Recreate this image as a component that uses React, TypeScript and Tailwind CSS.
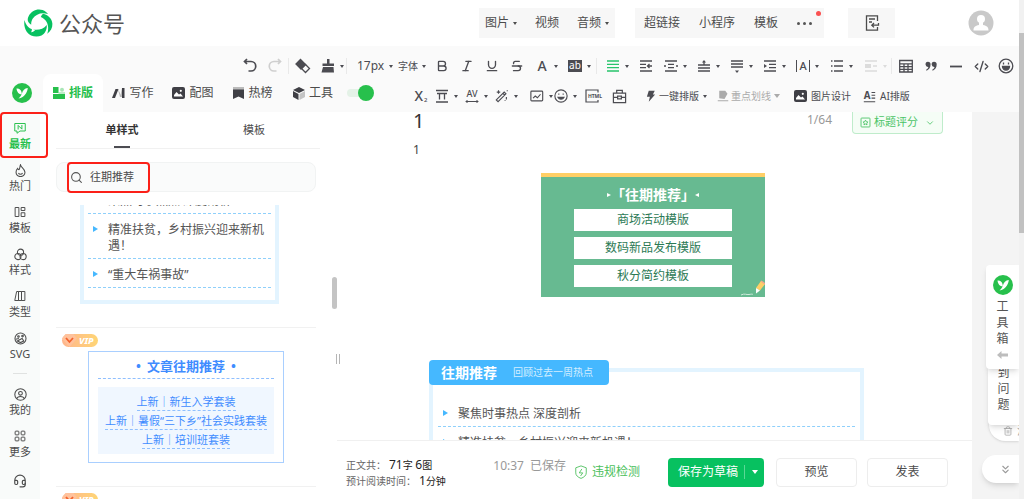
import type { ReactNode } from "react";
import {
	Bold,
	ChevronDown,
	ChevronsDown,
	CodeXml,
	Headset,
	Italic,
	Search,
	Strikethrough,
	Trash2,
	Underline,
} from "lucide-react";

interface ChildrenProps {
	children: ReactNode;
}

/** 16x16 outline icon, drawn with the current text color */
function Glyph({ children, size = 16 }: { children: ReactNode; size?: number }) {
	return (
		<svg
			width={size}
			height={size}
			viewBox="0 0 16 16"
			fill="none"
			stroke="currentColor"
			strokeWidth={1.3}
			className="shrink-0"
			aria-hidden="true"
		>
			{children}
		</svg>
	);
}

function Caret() {
	return (
		<svg width="4" height="3" viewBox="0 0 4 3" fill="currentColor" className="shrink-0" aria-hidden="true">
			<path d="M0 0h4L2 3z" />
		</svg>
	);
}

function Divider() {
	return <div className="h-4 w-px shrink-0 bg-[#e9e9e9]" />;
}

interface ToolProps {
	label: string;
	children: ReactNode;
	caret?: boolean;
	className?: string;
}

function Tool({ label, children, caret = false, className = "" }: ToolProps) {
	return (
		<button
			type="button"
			aria-label={label}
			className={`flex h-4 shrink-0 items-center ${className || (caret ? "w-[33px]" : "w-[25px]")}`}
		>
			<span className="flex w-6 shrink-0 items-center justify-center">{children}</span>
			{caret && <Caret />}
		</button>
	);
}

function BrandMark({ size }: { size: number }) {
	return (
		<svg width={size} height={size} viewBox="0 0 20 20" className="shrink-0" aria-hidden="true">
			<circle cx="10" cy="10" r="10" fill="#27c04c" />
			<path d="M4.500 5.500c2.800-.2 4.300.9 5 3.600l.4 2.400c-3-.2-4.900-2-5.400-6z" fill="#fff" />
			<path d="M15.800 5c-.3 2.800-1.300 5-3 6.900-1.600 1.800-3.300 2.900-6.300 3.600 1.900-1.700 2.900-3.200 3.500-5.200.8-3 2.500-5 5.800-5.300z" fill="#fff" />
		</svg>
	);
}

/* ---------- header ---------- */

function HeaderLink({ children, caret = false }: { children: ReactNode; caret?: boolean }) {
	return (
		<button type="button" className="flex items-center gap-1">
			{children}
			{caret && <Caret />}
		</button>
	);
}

function Header() {
	return (
		<header className="flex h-[46px] shrink-0 items-center bg-white text-xs text-[#4c4c4c]">
			<a href="#" className="flex items-center gap-1.5 pl-6 text-[22px] leading-7 text-[#555]">
				<svg width="29" height="28" viewBox="0 0 29 28" aria-hidden="true">
					<path d="M4.500 7.500C8 .5 16-1.500 22 3c.8.7 1.500 1.400 2 2.100-6-2.300-11.800-.3-15.200 4.300-1.200 1.800-1.700 3.800-1.600 6.300C3.500 13.500 3 10.500 4.500 7.500z" fill="#07c160" />
					<path d="M19 4.800c5 1.200 9 4.800 9.400 9.900.2 4-1.800 7.700-5.200 10 .4-.7 1.300-4 .8-7.500-.6-4.300-2.700-7-7.200-9.200.4-1.200 1.200-2.300 2.200-3.200z" fill="#07c160" />
					<path d="M.6 11c.9 5.500 5.300 9.800 10.900 9.800 4.800.1 8.500-1.300 11.200-4.800.6 4-1.800 9-5.200 10.500-5 2.200-11.400.9-14.600-3.600-2.400-3.400-3.200-8.200-2.300-11.900z" fill="#07c160" />
					<path d="M7.800 19.500c.2 1.400 0 2.700-.8 3.800 2-.3 3.300-1 4.200-2.200z" fill="#fff" />
				</svg>
				公众号
			</a>
			<div className="ml-auto flex items-center pr-[25px]">
				<nav className="flex h-[30px] items-center gap-[18px] bg-[#f7f7f7] px-1.5">
					<HeaderLink caret>图片</HeaderLink>
					<HeaderLink>视频</HeaderLink>
					<HeaderLink caret>音频</HeaderLink>
				</nav>
				<nav className="relative ml-5 flex h-[30px] items-center gap-[19px] bg-[#f7f7f7] pl-[9px] pr-3">
					<HeaderLink>超链接</HeaderLink>
					<HeaderLink>小程序</HeaderLink>
					<HeaderLink>模板</HeaderLink>
					<button type="button" aria-label="更多" className="flex gap-[3px]">
						<i className="size-[3px] rounded-full bg-[#555]" />
						<i className="size-[3px] rounded-full bg-[#555]" />
						<i className="size-[3px] rounded-full bg-[#555]" />
					</button>
					<i className="absolute right-[3px] top-[3px] size-[5px] rounded-full bg-[#fa5151]" />
				</nav>
				<button type="button" aria-label="导入" className="ml-6 flex h-[30px] w-[47px] items-center justify-center bg-[#f7f7f7]">
					<Glyph>
						<path d="M13.500 6V.8h-11v14.400h11V12M5 4h6M5 7h3M14.500 8v2.200H8M10 8l-2.200 2.200L10 12.400" />
					</Glyph>
				</button>
				<svg width="26" height="26" viewBox="0 0 26 26" className="ml-[73px]" aria-label="头像">
					<circle cx="13" cy="13" r="12.500" fill="#c9c9c9" />
					<circle cx="13" cy="9" r="4" fill="#fff" />
					<path d="M11 11h4v4c4 .8 5.500 2 5.500 5.500h-15C5.500 17 7 15.800 11 15z" fill="#fff" />
				</svg>
			</div>
		</header>
	);
}

/* ---------- toolbar ---------- */

function TopTab({ icon, children }: { icon: ReactNode; children: ReactNode }) {
	return (
		<button type="button" className="flex w-[60px] shrink-0 items-center justify-center gap-1 text-xs text-[#4c4c4c]">
			{icon}
			{children}
		</button>
	);
}

function FormatRow() {
	return (
		<div className="flex h-7 items-end pl-[238px]">
			<Tool label="撤销">
				<Glyph><path d="M2.500 3.500H9a4.500 4.500 0 0 1 0 9.500H6.500M5 1L2.500 3.500 5 6" strokeWidth={1.700} /></Glyph>
			</Tool>
			<Tool label="重做" className="w-[25px] text-[#cfcfcf]">
				<Glyph><path d="M13.500 3.500H7A4.500 4.500 0 0 0 7 13h2.500M11 1l2.500 2.500L11 6" strokeWidth={1.700} /></Glyph>
			</Tool>
			<Divider />
			<Tool label="清除格式" className="ml-0.5 w-[25px]">
				<Glyph>
					<path d="M5.500 1.500l5 5-4.500 4.500-5-5z" fill="currentColor" />
					<path d="M10.500 6.500l4 4-4 4-4-4z" />
				</Glyph>
			</Tool>
			<Tool label="格式刷" caret className="w-[30px]">
				<Glyph>
					<path d="M7 1h2.500v4.500H14V8H2.500V5.500H7zM3 9h10.500l.5 5.500H1.500z" fill="currentColor" stroke="none" />
				</Glyph>
			</Tool>
			<Divider />
			<label className="ml-2.5 flex h-4 shrink-0 items-center gap-1 text-xs">
				<select aria-label="字号" className="h-4 w-7 appearance-none text-xs leading-4"><option>17px</option></select>
				<Caret />
			</label>
			<label className="ml-[5px] flex h-4 w-8 shrink-0 items-center gap-1">
				<select aria-label="字体" className="h-4 appearance-none text-[10px] leading-4"><option>字体</option></select>
				<Caret />
			</label>
			<Tool label="加粗"><Bold size={14} strokeWidth={2.3} /></Tool>
			<Tool label="斜体"><Italic size={14} strokeWidth={2.3} /></Tool>
			<Tool label="下划线"><Underline size={14} strokeWidth={2.3} /></Tool>
			<Tool label="删除线"><Strikethrough size={14} strokeWidth={2.3} /></Tool>
			<Tool label="文字颜色" caret><span className="text-sm font-medium leading-4">A</span></Tool>
			<Tool label="背景色" caret>
				<span className="h-3 w-[14px] bg-[#4c4c52] text-[10px] leading-[11px] text-white">ab</span>
			</Tool>
			<Divider />
			<Tool label="两端对齐" caret className="ml-1 w-[33px]">
				<span className="text-[#27c46b]"><Glyph><path d="M2 3h12M2 6.300h12M2 9.700h12M2 13h12" /></Glyph></span>
			</Tool>
			<Tool label="缩进">
				<Glyph><path d="M2 3h12M2 6.300h6M2 9.700h6M2 13h12M9.500 8H14M11.500 6l-2 2 2 2" /></Glyph>
			</Tool>
			<Tool label="两侧缩进" caret>
				<Glyph><path d="M2 3h12M5 6.300h6M5 9.700h6M2 13h12M1 8h2M13 8h2" /></Glyph>
			</Tool>
			<Tool label="段前距" caret>
				<Glyph><path d="M2 7h12M2 10h12M2 13h12M8 4v3" /><path d="M8 2l2 2.500H6z" fill="currentColor" stroke="none" /></Glyph>
			</Tool>
			<Tool label="段后距" caret>
				<Glyph><path d="M2 3h12M2 6h12M2 9h12" /><path d="M8 15l2-2.500H6z" fill="currentColor" stroke="none" /></Glyph>
			</Tool>
			<Tool label="行间距" caret>
				<Glyph><path d="M2 3h12M7 6.300h7M7 9.700h7M2 13h12" /><path d="M2 6l3 2-3 2z" fill="currentColor" stroke="none" /></Glyph>
			</Tool>
			<Tool label="字间距" caret className="w-[34px]">
				<span className="flex h-3 w-[14px] items-center justify-center border-x border-current text-[11px] font-medium leading-3">A</span>
			</Tool>
			<Tool label="列表" caret className="w-[34px]">
				<Glyph><path d="M5 3h9M5 8h9M5 13h9M2 3h1.500M2 8h1.500M2 13h1.500" /></Glyph>
			</Tool>
			<Tool label="浮动" caret className="w-8 text-[#dcdcdc]">
				<Glyph><path d="M2 3h12M10 8h4M2 13h12" /><path d="M2 6h6v4H2z" fill="currentColor" stroke="none" /></Glyph>
			</Tool>
			<Divider />
			<Tool label="表格" className="ml-0.5 w-[25px]">
				<Glyph><path d="M1.700 2.500h12.600v11.500H1.700zM1.700 5.800h12.600M1.700 8.600h12.600M1.700 11.300h12.600M6 5.800V14M10 5.800V14" /></Glyph>
			</Tool>
			<Tool label="引用">
				<Glyph size={14}>
					<path d="M4.500 3a3 3 0 0 1 3 3c0 3.500-1.500 6-4.500 7.300l-.7-1C4 11.300 4.800 10.300 5 9a3 3 0 1 1-.5-6zM11.500 3a3 3 0 0 1 3 3c0 3.500-1.500 6-4.500 7.300l-.7-1c1.700-1 2.500-2 2.700-3.300a3 3 0 1 1-.5-6z" fill="currentColor" stroke="none" />
				</Glyph>
			</Tool>
			<Tool label="分割线"><Glyph><path d="M2 8.500h12" strokeWidth={1.800} /></Glyph></Tool>
			<Tool label="代码"><CodeXml size={15} strokeWidth={2.200} /></Tool>
			<Tool label="表情">
				<Glyph>
					<circle cx="8" cy="8" r="6.800" />
					<path d="M4.500 8.500h7a3.500 3.500 0 0 1-7 0z" fill="currentColor" />
					<path d="M5.500 4.500v2M10.500 4.500v2" />
				</Glyph>
			</Tool>
		</div>
	);
}

function InsertTools() {
	return (
		<div className="ml-[35px] flex items-center pt-1.5 text-[10px]">
			<Tool label="下标" className="w-[21px]">
				<span className="flex items-end gap-px text-sm font-medium leading-4">X<sub className="bottom-0 text-[6px] leading-[8px]">2</sub></span>
			</Tool>
			<Tool label="标题样式" caret className="w-[30px]">
				<Glyph><path d="M2 2.500h12M2 14h12M3 5.500h10M5.500 5.500v6M10.500 5.500v6" /></Glyph>
			</Tool>
			<Tool label="字距" caret className="w-[30px]">
				<Glyph>
					<path d="M2 13.500h12M3.500 12L2 13.500 3.500 15M12.500 12l1.500 1.500-1.500 1.500" strokeWidth={1} />
					<text x="8" y="9" fontSize="9" fontWeight="500" textAnchor="middle" fill="currentColor" stroke="none">AV</text>
				</Glyph>
			</Tool>
			<Tool label="魔法棒" caret className="w-[35px]">
				<Glyph size={14}><path d="M1.500 12.500l9-9 2 2-9 9zM9 5l2 2M4 1.500v4M2 3.500h4M13 9v3M11.500 12.500v1M14 1.500v1" /></Glyph>
			</Tool>
			<Tool label="图片" caret className="w-6">
				<Glyph size={14}><rect x="1" y="2.500" width="13.500" height="11" rx="1" /><path d="M3.500 10.500L6 8l2.500 2L12 6" /></Glyph>
			</Tool>
			<Tool label="表情" caret className="w-[33px]">
				<Glyph size={14}>
					<circle cx="8" cy="8" r="7" />
					<path d="M4.500 9.500c1.500 3 5.500 3 7 0z" fill="currentColor" />
					<path d="M5.500 5v1.500M10.500 5v1.500" />
				</Glyph>
			</Tool>
			<Tool label="HTML">
				<svg width="20" height="14" viewBox="0 0 20 14" fill="none" stroke="currentColor" strokeWidth={1.2} className="shrink-0" aria-hidden="true">
					<path d="M14 3.500V1H2v12h12v-2" />
					<text x="11" y="9" fontSize="5" fontWeight="700" textAnchor="middle" fill="currentColor" stroke="none">HTML</text>
				</svg>
			</Tool>
			<Tool label="素材箱" className="w-6">
				<Glyph size={15}><path d="M1.500 4.500h13v10h-13zM5 4.500v-3h6v3M1.500 9h4M10.500 9h4M6 7.500h4v3H6z" /></Glyph>
			</Tool>
			<button type="button" className="ml-3.5 flex items-center gap-0.5">
				<Glyph size={12}><path d="M5 1h8l-2.500 5h3L5 15.500l1.500-6.500H2.500z" fill="currentColor" stroke="none" /></Glyph>
				一键排版
				<span className="pl-0.5"><Caret /></span>
			</button>
			<button type="button" className="ml-2.5 flex items-center gap-0.5 text-[#aaa]">
				<Glyph size={12}><path d="M3 1h8l3 4-4 7-7-1zM1 13.500h14V15H1z" fill="currentColor" stroke="none" /></Glyph>
				重点划线
				<svg width="6" height="4" viewBox="0 0 6 4" fill="currentColor" className="ml-px"><path d="M0 0h6L3 4z" /></svg>
			</button>
			<button type="button" className="ml-3.5 flex items-center gap-1">
				<PictureIcon />
				图片设计
			</button>
			<button type="button" className="ml-3 flex items-center gap-1">
				<Glyph size={13}>
					<path d="M10.500 3H15M10.500 6.500H15M10.500 10H15M1 14.500h14" />
					<text x="5" y="11" fontSize="12" fontWeight="700" textAnchor="middle" fill="currentColor" stroke="none">A</text>
				</Glyph>
				AI排版
			</button>
		</div>
	);
}

function PictureIcon() {
	return (
		<svg width="13" height="12" viewBox="0 0 13 12" className="shrink-0" aria-hidden="true">
			<rect width="13" height="12" rx="2" fill="#3f3f45" />
			<path d="M2 9.500V8l2.500-3L7 7.500 8.500 6.500 11 9.500z" fill="#fff" />
			<circle cx="8.800" cy="3.800" r="1.100" fill="#fff" />
		</svg>
	);
}

function Toolbar() {
	return (
		<div className="shrink-0 bg-[#fafafa] text-[#4c4c52]">
			<FormatRow />
			<div className="flex h-[38px] items-center">
				<div className="flex w-[43px] shrink-0 items-center pl-3"><BrandMark size={20} /></div>
				<button
					type="button"
					className="flex h-full w-[60px] shrink-0 items-center justify-center gap-1 rounded-t-lg bg-white text-xs font-bold text-[#27c04c]"
				>
					<svg width="12" height="12" viewBox="0 0 12 12" fill="currentColor" aria-hidden="true">
						<path d="M0 0h5.500v6H0zM0 7h12v5H0z" />
						<circle cx="9" cy="2.800" r="2" opacity=".4" />
						<path d="M5.500 5H12v3H5.500z" opacity=".3" />
					</svg>
					排版
				</button>
				<TopTab
					icon={
						<svg width="13" height="12" viewBox="0 0 13 12" aria-hidden="true">
							<path d="M0 11l3.500-9h3L3 11z" fill="#3f3f45" />
							<path d="M5.500 1l3.500 7V1l2 9H8z" fill="#bbb" />
							<path d="M10 1h2.500v10H10z" fill="#3f3f45" />
						</svg>
					}
				>
					写作
				</TopTab>
				<TopTab icon={<PictureIcon />}>配图</TopTab>
				<TopTab
					icon={
						<svg width="11" height="12" viewBox="0 0 11 12" aria-hidden="true">
							<path d="M0 0h11v3H0z" fill="#bbb" />
							<path d="M0 2.500h11V12L5.500 9.500 0 12z" fill="#3f3f45" />
						</svg>
					}
				>
					热榜
				</TopTab>
				<TopTab
					icon={
						<svg width="12" height="13" viewBox="0 0 12 13" aria-hidden="true">
							<path d="M6 0l6 3-6 3-6-3z" fill="#3f3f45" />
							<path d="M0 4l5.500 3v6L0 10z" fill="#3f3f45" />
							<path d="M12 4L6.500 7v6l5.500-3z" fill="#c4c4c4" />
						</svg>
					}
				>
					工具
				</TopTab>
				<input
					type="checkbox"
					aria-label="启用插件"
					defaultChecked
					className="relative ml-1 h-4 w-[27px] shrink-0 appearance-none before:absolute before:left-0 before:top-1 before:h-2 before:w-5 before:rounded-full before:bg-[#e4f2e7] after:absolute after:right-0 after:top-0 after:size-4 after:rounded-full after:bg-[#27c04c]"
				/>
				<InsertTools />
			</div>
		</div>
	);
}

/* ---------- left side ---------- */

function SideItem({ icon, children, active = false }: { icon: ReactNode; children?: ReactNode; active?: boolean }) {
	return (
		<a
			href="#"
			className={`flex h-[42px] shrink-0 flex-col items-center gap-px text-[11px] leading-4 ${
				active ? "font-bold text-[#27c04c]" : "text-[#4c4c4c]"
			}`}
		>
			<span className="flex h-3.5 items-center">{icon}</span>
			{children}
		</a>
	);
}

function Sidebar() {
	return (
		<aside className="relative flex w-10 shrink-0 flex-col bg-[#f9fbfa] pt-[9px]">
			<SideItem active icon={<Glyph size={12}><path d="M1 2h14v10H8l-4 3v-3H1z" /><path d="M5.500 10V4.500l5 5V4" /></Glyph>}>最新</SideItem>
			<SideItem icon={<Glyph size={13}><path d="M8 1c.5 3 5.500 5 5.500 9a5.500 5.500 0 0 1-11 0c0-2 1-3.500 2-4.500.3 1 .8 1.500 1.500 1.500C7.500 6 7 3 8 1zM5.500 11c1 2 4 2 5 0" /></Glyph>}>热门</SideItem>
			<SideItem icon={<Glyph size={12}><path d="M1.500 2h5v12h-5zM9.500 2h5v4h-5zM9.500 9h5v5h-5z" /></Glyph>}>模板</SideItem>
			<SideItem icon={<Glyph size={13}><circle cx="8" cy="5.200" r="3.800" /><circle cx="4.800" cy="10.500" r="3.800" /><circle cx="11.200" cy="10.500" r="3.800" /></Glyph>}>样式</SideItem>
			<SideItem icon={<Glyph size={12}><path d="M1 14L3.500 2H6v12zM6 2h4v12H6zM10 2h4.500v12H10z" /></Glyph>}>类型</SideItem>
			<SideItem icon={<Glyph size={13}><circle cx="8" cy="8" r="6.800" /><circle cx="5.500" cy="5.500" r="1" /><circle cx="10.500" cy="5" r="1" /><path d="M4 11l6-3 2 3-4 2zM2 9l4-1" /></Glyph>}>SVG</SideItem>
			<div className="mx-auto h-3.5 w-[14px] shrink-0 border-t border-[#e0e2e1]" />
			<SideItem icon={<Glyph size={13}><circle cx="8" cy="8" r="7" /><circle cx="8" cy="6.500" r="2.300" /><path d="M3.500 13c.8-3.500 8.200-3.500 9 0" /></Glyph>}>我的</SideItem>
			<SideItem icon={<Glyph size={12}><rect x="1.500" y="1.500" width="5" height="5" rx="1" /><rect x="9.500" y="1.500" width="5" height="5" rx="1" /><rect x="1.500" y="9.500" width="5" height="5" rx="1" /><rect x="9.500" y="9.500" width="5" height="5" rx="1" /></Glyph>}>更多</SideItem>
			<SideItem icon={<Headset size={14} strokeWidth={2} className="mt-1.5" />} />
			<div className="absolute left-0 top-0 z-20 h-[46px] w-12 rounded-sm border-2 border-[#fb2018]" />
		</aside>
	);
}

function HotItem({ children }: ChildrenProps) {
	return (
		<li className="flex border-b border-dashed border-[#8fd0fb] pb-1 pl-[5px] pt-2 text-xs leading-4 text-[#555]">
			<svg width="5" height="6" viewBox="0 0 5 6" className="mr-[10px] mt-1 shrink-0" aria-hidden="true">
				<path d="M0 0l5 3-5 3z" fill="#45b8ff" />
			</svg>
			<span>{children}</span>
		</li>
	);
}

function VipBadge() {
	return (
		<div className="flex h-[13px] w-9 items-center rounded-full bg-linear-to-r from-[#ffb58c] to-[#ffd575] text-[9px] font-extrabold italic leading-[13px] text-white">
			<svg width="15" height="13" viewBox="0 0 15 13" className="mr-0.5 shrink-0" aria-hidden="true">
				<path d="M3.500 0h8L15 4.500 7.500 13 0 4.500z" fill="#ffc29c" />
				<path d="M4 4l3.500 4L11 4" fill="none" stroke="#f4622c" strokeWidth="1.800" />
			</svg>
			VIP
		</div>
	);
}

function NewLink({ children }: ChildrenProps) {
	return (
		<li className="h-[19px]">
			<a href="#" className="inline-block border-b border-dashed border-[#8fbfff] leading-4">{children}</a>
		</li>
	);
}

function StylePanel() {
	return (
		<section className="flex w-[292px] shrink-0 flex-col pl-4 pr-3">
			<div className="flex h-[37px] shrink-0 border-b border-[#f1f1f1] text-[11px] text-[#4c4c4c]">
				<button type="button" className="relative flex-1 font-bold text-[#333]">
					单样式
					<i className="absolute bottom-0 left-1/2 h-0.5 w-4 -translate-x-1/2 bg-[#4c4c52]" />
				</button>
				<button type="button" className="flex-1">模板</button>
			</div>
			<div className="relative mr-1 mt-[13px] flex h-[30px] shrink-0 items-center gap-[7px] rounded-lg border border-[#f1f3f3] bg-[#fafbfb] pl-[13px]">
				<Search size={13} strokeWidth={2} className="shrink-0 text-[#555]" />
				<input aria-label="搜索" defaultValue="往期推荐" className="w-full min-w-0 bg-transparent text-[11px] leading-4 text-[#4c4c4c] outline-none" />
				<div className="pointer-events-none absolute -top-px left-2.5 h-[31px] w-[83px] rounded-sm border-2 border-[#fb2018]" />
			</div>
			<div className="mr-1 mt-[13px] min-h-0 flex-1 overflow-hidden">
				<div className="-mt-5 border-b border-[#f1f1f1] pb-[23px] pl-6 pr-[37px]">
					<ul className="border-4 border-t-0 border-[#e3f4ff] px-1 pb-3">
						<HotItem>聚焦时事热点 深度剖析</HotItem>
						<HotItem>精准扶贫，乡村振兴迎来新机遇！</HotItem>
						<HotItem>“重大车祸事故”</HotItem>
					</ul>
				</div>
				<div className="border-b border-[#f1f1f1] pb-[23px] pl-1.5 pr-8 pt-1.5">
					<VipBadge />
					<div className="ml-[26px] mt-1 border border-[#a9cfff] px-[9px] pb-2 text-center text-[#3f8cff]">
						<h3 className="flex justify-center gap-1.5 border-b border-dashed border-[#8fbfff] pb-0.5 pt-1 text-[13px] font-bold leading-5">
							<span>•</span>
							文章往期推荐
							<span>•</span>
						</h3>
						<ul className="mt-2 bg-[#f0f7ff] pb-[3px] pt-[7px] text-[11px]">
							<NewLink>上新｜新生入学套装</NewLink>
							<NewLink>上新｜暑假“三下乡”社会实践套装</NewLink>
							<NewLink>上新｜培训班套装</NewLink>
						</ul>
					</div>
				</div>
				<div className="pl-1.5 pt-1.5">
					<VipBadge />
				</div>
			</div>
		</section>
	);
}

/* ---------- editor ---------- */

function GreenCard() {
	return (
		<div className="relative ml-32 mt-[15px] w-56 border-t-4 border-[#ffcf66] bg-[#67ba91] px-[33px] pb-2.5 pt-2 text-center">
			<h3 className="flex items-center justify-center gap-1 text-sm font-bold leading-5 text-white">
				<svg width="4" height="4" viewBox="0 0 4 4" fill="currentColor"><path d="M0 0l4 2-4 2z" /></svg>
				<span className="-mx-1">「往期推荐」</span>
				<svg width="4" height="4" viewBox="0 0 4 4" fill="currentColor"><path d="M4 0L0 2l4 2z" /></svg>
			</h3>
			<ul className="mt-1 flex flex-col gap-1.5 text-xs text-[#2c7a55]">
				<li className="bg-white leading-[22px]">商场活动模版</li>
				<li className="bg-white leading-[22px]">数码新品发布模版</li>
				<li className="bg-white leading-[22px]">秋分简约模板</li>
			</ul>
			<svg width="26" height="17" viewBox="0 0 26 17" className="absolute bottom-0 right-0" aria-hidden="true">
				<path d="M2 15c4-2 5 0 8-.5s3-.5 4 0" fill="none" stroke="#cfeadb" strokeWidth="1" />
				<path d="M17 8l5-7 4 3-5 6.500z" fill="#ffcf66" />
				<path d="M17 8l4 2.500-4 3z" fill="#fff" />
				<path d="M22 1l4 3" stroke="#f6a98a" strokeWidth="1.500" />
			</svg>
		</div>
	);
}

function HotCard() {
	return (
		<div className="relative ml-4 mr-8 mt-[71px] h-[140px] border-4 border-[#e3f4ff] px-[5px] pt-[26px]">
			<h3 className="absolute -left-1 -top-3 flex h-[25px] items-center gap-4 whitespace-nowrap rounded-sm bg-[#45b8ff] pl-3 pr-4 text-sm font-bold text-white">
				往期推荐
				<span className="text-[10px] font-normal text-[#d3eeff]">回顾过去一周热点</span>
			</h3>
			<ul>
				<HotItem>聚焦时事热点 深度剖析</HotItem>
				<HotItem>精准扶贫，乡村振兴迎来新机遇！</HotItem>
			</ul>
		</div>
	);
}

function StatusBar() {
	return (
		<footer className="flex h-[59px] shrink-0 items-center border-t border-[#f0f0f0] bg-white pl-[9px] pr-6 pt-1 text-xs text-[#4c4c4c]">
			<dl className="pt-0.5 text-[10px] leading-4 text-[#666]">
				<div className="flex gap-[3px]">
					<dt>正文共：</dt>
					<dd className="text-[#222]"><span className="text-xs leading-4">71</span>字 <span className="text-xs leading-4">6</span>图</dd>
				</div>
				<div className="flex gap-[3px]">
					<dt>预计阅读时间：</dt>
					<dd className="text-[#222]"><span className="text-xs leading-4">1</span>分钟</dd>
				</div>
			</dl>
			<div className="ml-auto flex gap-1.5 pb-3 text-[#999]">
				<span>10:37</span>
				<span>已保存</span>
			</div>
			<button type="button" className="ml-2 flex items-center gap-1 text-[#4cbf5c]">
				<Glyph size={14}>
					<path d="M8 1l6 2.200V9c0 3-2.500 5-6 6.300C4.500 14 2 12 2 9V3.200z" strokeWidth={1} />
					<path d="M9 4.500L6 9h4l-2.500 3.500" strokeWidth={1} />
				</Glyph>
				违规检测
			</button>
			<div className="ml-7 flex h-[29px] items-center rounded bg-[#07c160] text-white">
				<button type="button" className="pl-2.5 pr-1.5">保存为草稿</button>
				<button type="button" aria-label="更多保存选项" className="flex h-3.5 w-5 items-center justify-center border-l border-[#5bd895]">
					<svg width="6" height="4" viewBox="0 0 6 4" fill="currentColor"><path d="M0 0h6L3 4z" /></svg>
				</button>
			</div>
			<button type="button" className="ml-3 h-[29px] w-[81px] rounded border border-[#ededed]">预览</button>
			<button type="button" className="ml-2.5 h-[29px] w-[81px] rounded border border-[#ededed]">发表</button>
		</footer>
	);
}

function Editor() {
	return (
		<main className="flex min-w-0 flex-1 flex-col bg-white">
			<div className="min-h-0 flex-1 overflow-hidden">
				<div className="flex h-7 items-start pl-[76px] pr-[29px]">
					<input aria-label="标题" defaultValue="1" className="h-4 min-w-0 flex-1 text-xl leading-4 text-[#333] outline-none" />
					<span className="text-xs leading-4 text-[#999]">1/64</span>
					<button type="button" className="ml-5 flex h-[22px] items-center gap-[3px] rounded-b border border-t-0 border-[#bfeccb] bg-[#f5fdf6] px-[7px] text-[11px] text-[#4cc467]">
						<Glyph size={11}><rect x="1.500" y="1.500" width="13" height="13" rx="1" /><path d="M8 4.500l1.200 2.300 2.300.4-1.700 1.700.4 2.500L8 10.200l-2.200 1.200.4-2.500-1.700-1.700 2.300-.4z" /></Glyph>
						标题评分
						<ChevronDown size={10} className="ml-1" />
					</button>
				</div>
				<div className="px-[76px]">
					<p className="pt-0.5 text-xs leading-4 text-[#444]">1</p>
					<GreenCard />
					<HotCard />
				</div>
			</div>
			<StatusBar />
		</main>
	);
}

/* ---------- floating helpers on the right ---------- */

function RightRail() {
	return (
		<aside className="flex w-[47px] shrink-0 flex-col items-end overflow-hidden bg-[#f4f4f4] pt-[153px] text-xs leading-4 text-[#555]">
			<button type="button" className="z-20 flex w-[33px] flex-col items-center rounded-l bg-white pb-2.5 pt-2.5 shadow-md">
				<BrandMark size={20} />
				<span className="mt-1 w-3">工具箱</span>
				<svg width="11" height="8" viewBox="0 0 11 8" className="mt-1" aria-hidden="true">
					<path d="M0 4l4.500-4v2.500H11v3H4.500V8z" fill="#bdbdbd" />
				</svg>
			</button>
			<button type="button" className="z-10 -mt-1 flex w-[31px] justify-center rounded-bl bg-white pb-3 shadow-md">
				<span className="w-3">到问题</span>
			</button>
			<button type="button" className="-mt-1 flex h-5 w-[30px] items-center gap-1 overflow-hidden rounded-bl-2xl bg-white pl-3.5 text-[#aaa] shadow-sm">
				<Trash2 size={10} className="shrink-0" />
				清
			</button>
			<button type="button" aria-label="收起" className="mt-3.5 flex h-7 w-[37px] shrink-0 items-center justify-center rounded-l-full bg-white pl-2.5 text-[#999] shadow-md">
				<ChevronsDown size={13} />
			</button>
		</aside>
	);
}

export default function App() {
	return (
		<div className="flex h-screen overflow-hidden bg-white font-['Noto_Sans','Noto_Sans_CJK_SC',sans-serif]">
			<div className="flex min-w-0 flex-1 flex-col">
				<Header />
				<Toolbar />
				<div className="flex min-h-0 flex-1">
					<Sidebar />
					<StylePanel />
					<div className="z-10 flex w-[5px] shrink-0 flex-col pt-[165px]">
						<div className="h-8 w-[5px] rounded-full bg-[#c4c4c4]" />
						<div className="ml-1 mt-[45px] h-2.5 w-1 border-x border-[#b5b5b5]" />
					</div>
					<Editor />
					<RightRail />
				</div>
			</div>
			<div className="w-[5px] shrink-0 bg-[#f1f1f1] pt-[33px]">
				<div className="h-[200px] bg-[#c1c1c1]" />
			</div>
		</div>
	);
}
